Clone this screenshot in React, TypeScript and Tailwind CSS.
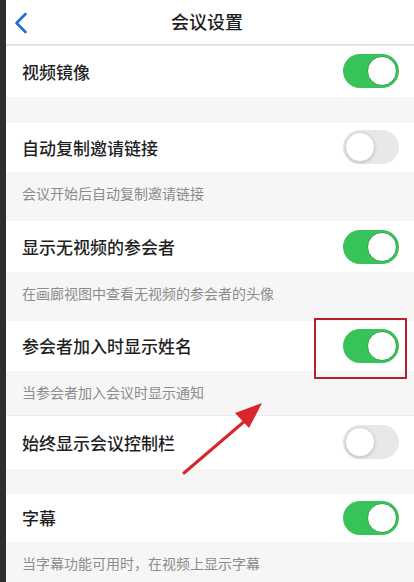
import React from 'react'

const font = { fontFamily: '"Noto Sans CJK SC", "Noto Sans", sans-serif' }

function Toggle({ on }: { on: boolean }) {
  if (on) {
    return (
      <div className="w-[56px] h-[34px] rounded-full bg-[#37c25a] flex items-center justify-end p-[2px]">
        <div className="w-[30px] h-[30px] rounded-full bg-white border border-[#2f9e4a]" />
      </div>
    )
  }
  return (
    <div className="w-[56px] h-[34px] rounded-full bg-[#e8e8e8] flex items-center justify-start p-[2px]">
      <div className="w-[30px] h-[30px] rounded-full bg-white border border-[#d6d6d6] shadow-[0_1px_3px_rgba(0,0,0,0.18)]" />
    </div>
  )
}

function Row({ label, on, h }: { label: string; on: boolean; h: string }) {
  return (
    <div className={`${h} bg-white flex items-center justify-between pl-[16px] pr-[15px]`}>
      <span className="text-[17px] text-[#1f1f1f] font-medium">{label}</span>
      <Toggle on={on} />
    </div>
  )
}

function Desc({ text, h }: { text: string; h: string }) {
  return (
    <div className={`${h} pl-[16px] pt-[8px]`}>
      <span className="text-[14px] text-[#8c8c8c] leading-[22px]">{text}</span>
    </div>
  )
}

export default function App() {
  return (
    <div className="w-[414px] h-[582px] flex overflow-hidden bg-[#f6f6f6]" style={font}>
      <div className="w-[6px] bg-[#2e2e2e]" />
      <div className="flex-1 relative flex flex-col">
        <div className="h-[46px] bg-white border-b-2 border-[#e4e4e4] flex items-center relative">
          <svg className="absolute left-[8px] top-[12px]" width="14" height="22" viewBox="0 0 14 22" fill="none">
            <path d="M11.5 2 L2.5 11 L11.5 20" stroke="#1d6fd8" strokeWidth="2.6" strokeLinecap="round" strokeLinejoin="round" />
          </svg>
          <div className="flex-1 text-center text-[18px] text-[#1f1f1f] font-medium pr-[6px]">会议设置</div>
        </div>

        <Row label="视频镜像" on h="h-[51px]" />
        <div className="h-[26px]" />
        <Row label="自动复制邀请链接" on={false} h="h-[50px]" />
        <Desc text="会议开始后自动复制邀请链接" h="h-[49px]" />
        <Row label="显示无视频的参会者" on h="h-[51px]" />
        <Desc text="在画廊视图中查看无视频的参会者的头像" h="h-[49px]" />
        <Row label="参会者加入时显示姓名" on h="h-[50px]" />
        <Desc text="当参会者加入会议时显示通知" h="h-[45px] border-b border-[#ececec]" />
        <Row label="始终显示会议控制栏" on={false} h="h-[54px]" />
        <div className="h-[25px]" />
        <Row label="字幕" on h="h-[48px]" />
        <Desc text="当字幕功能可用时，在视频上显示字幕" h="h-[40px]" />

        <div className="absolute left-[308px] top-[318px] w-[93px] h-[61px] border-2 border-[#b3212b]" />

        <svg className="absolute left-0 top-0 pointer-events-none" width="408" height="582" viewBox="0 0 408 582">
          <line x1="178" y1="473" x2="240" y2="420" stroke="#d8262a" strokeWidth="3" strokeLinecap="round" />
          <polygon points="256,403 229,413 243,428" fill="#d8262a" />
        </svg>
      </div>
    </div>
  )
}
